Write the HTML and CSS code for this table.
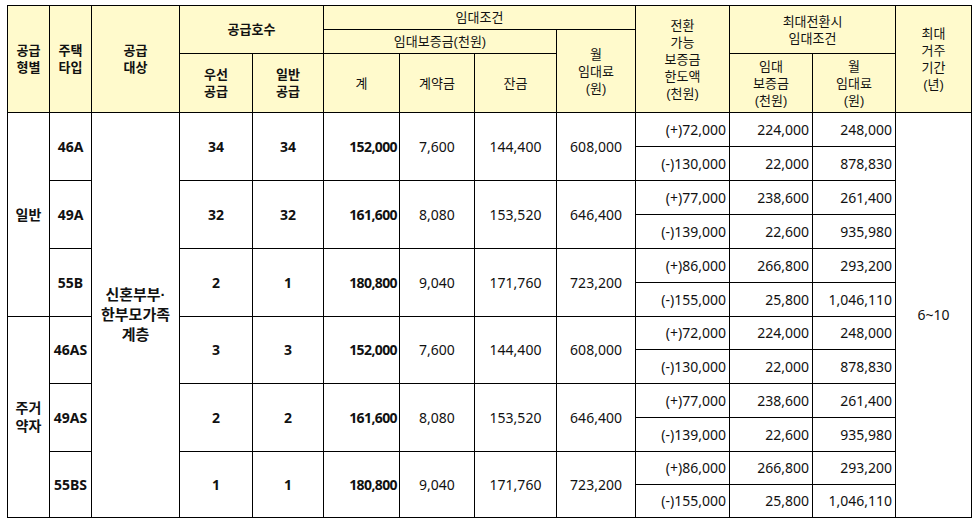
FILE: index.html
```html
<!DOCTYPE html>
<html lang="ko">
<head>
<meta charset="utf-8">
<title>임대조건</title>
<link rel="stylesheet" href="styles.css">
</head>
<body>
<table class="rent">
  <colgroup>
    <col class="c-type"><col class="c-house"><col class="c-target">
    <col class="c-pri"><col class="c-gen">
    <col class="c-sum"><col class="c-contract"><col class="c-balance"><col class="c-month">
    <col class="c-conv"><col class="c-dep"><col class="c-rent"><col class="c-period">
  </colgroup>
  <thead>
    <tr class="h1">
      <th rowspan="3" class="hb">공급<br>형별</th>
      <th rowspan="3" class="hb">주택<br>타입</th>
      <th rowspan="3" class="hb">공급<br>대상</th>
      <th rowspan="2" colspan="2" class="hb">공급호수</th>
      <th colspan="4">임대조건</th>
      <th rowspan="3">전환<br>가능<br>보증금<br>한도액<br>(천원)</th>
      <th rowspan="2" colspan="2">최대전환시<br>임대조건</th>
      <th rowspan="3">최대<br>거주<br>기간<br>(년)</th>
    </tr>
    <tr class="h2">
      <th colspan="3">임대보증금(천원)</th>
      <th rowspan="2">월<br>임대료<br>(원)</th>
    </tr>
    <tr class="h3">
      <th class="hb">우선<br>공급</th>
      <th class="hb">일반<br>공급</th>
      <th>계</th>
      <th>계약금</th>
      <th>잔금</th>
      <th>임대<br>보증금<br>(천원)</th>
      <th>월<br>임대료<br>(원)</th>
    </tr>
  </thead>
  <tbody>
    <tr class="ra">
      <td rowspan="6" class="bold kor">일반</td>
      <td rowspan="2" class="bold">46A</td>
      <td rowspan="12" class="bold target">신혼부부·<br>한부모가족<br>계층</td>
      <td rowspan="2" class="bold">34</td>
      <td rowspan="2" class="bold">34</td>
      <td rowspan="2" class="bold sum">152,000</td>
      <td rowspan="2">7,600</td>
      <td rowspan="2">144,400</td>
      <td rowspan="2">608,000</td>
      <td class="num">(+)72,000</td>
      <td class="num">224,000</td>
      <td class="num">248,000</td>
      <td rowspan="12">6~10</td>
    </tr>
    <tr class="ra">
      <td class="num">(-)130,000</td>
      <td class="num">22,000</td>
      <td class="num">878,830</td>
    </tr>
    <tr class="ra">
      <td rowspan="2" class="bold">49A</td>
      <td rowspan="2" class="bold">32</td>
      <td rowspan="2" class="bold">32</td>
      <td rowspan="2" class="bold sum">161,600</td>
      <td rowspan="2">8,080</td>
      <td rowspan="2">153,520</td>
      <td rowspan="2">646,400</td>
      <td class="num">(+)77,000</td>
      <td class="num">238,600</td>
      <td class="num">261,400</td>
    </tr>
    <tr class="ra">
      <td class="num">(-)139,000</td>
      <td class="num">22,600</td>
      <td class="num">935,980</td>
    </tr>
    <tr class="ra">
      <td rowspan="2" class="bold">55B</td>
      <td rowspan="2" class="bold">2</td>
      <td rowspan="2" class="bold">1</td>
      <td rowspan="2" class="bold sum">180,800</td>
      <td rowspan="2">9,040</td>
      <td rowspan="2">171,760</td>
      <td rowspan="2">723,200</td>
      <td class="num">(+)86,000</td>
      <td class="num">266,800</td>
      <td class="num">293,200</td>
    </tr>
    <tr class="ra">
      <td class="num">(-)155,000</td>
      <td class="num">25,800</td>
      <td class="num">1,046,110</td>
    </tr>
    <tr class="rb">
      <td rowspan="6" class="bold kor">주거<br>약자</td>
      <td rowspan="2" class="bold">46AS</td>
      <td rowspan="2" class="bold">3</td>
      <td rowspan="2" class="bold">3</td>
      <td rowspan="2" class="bold sum">152,000</td>
      <td rowspan="2">7,600</td>
      <td rowspan="2">144,400</td>
      <td rowspan="2">608,000</td>
      <td class="num">(+)72,000</td>
      <td class="num">224,000</td>
      <td class="num">248,000</td>
    </tr>
    <tr class="ra">
      <td class="num">(-)130,000</td>
      <td class="num">22,000</td>
      <td class="num">878,830</td>
    </tr>
    <tr class="ra">
      <td rowspan="2" class="bold">49AS</td>
      <td rowspan="2" class="bold">2</td>
      <td rowspan="2" class="bold">2</td>
      <td rowspan="2" class="bold sum">161,600</td>
      <td rowspan="2">8,080</td>
      <td rowspan="2">153,520</td>
      <td rowspan="2">646,400</td>
      <td class="num">(+)77,000</td>
      <td class="num">238,600</td>
      <td class="num">261,400</td>
    </tr>
    <tr class="ra">
      <td class="num">(-)139,000</td>
      <td class="num">22,600</td>
      <td class="num">935,980</td>
    </tr>
    <tr class="rb">
      <td rowspan="2" class="bold">55BS</td>
      <td rowspan="2" class="bold">1</td>
      <td rowspan="2" class="bold">1</td>
      <td rowspan="2" class="bold sum">180,800</td>
      <td rowspan="2">9,040</td>
      <td rowspan="2">171,760</td>
      <td rowspan="2">723,200</td>
      <td class="num">(+)86,000</td>
      <td class="num">266,800</td>
      <td class="num">293,200</td>
    </tr>
    <tr class="rb">
      <td class="num">(-)155,000</td>
      <td class="num">25,800</td>
      <td class="num">1,046,110</td>
    </tr>
  </tbody>
</table>
</body>
</html>
```

FILE: styles.css
```css
html, body {
  margin: 0;
  background: #ffffff;
}
body {
  padding: 5px 0 0 7px;
  font-family: "Noto Sans", "Noto Sans CJK KR", sans-serif;
  color: #111111;
}
.rent {
  border-collapse: collapse;
  table-layout: fixed;
  width: 964px;
}
.rent th, .rent td {
  border: 1px solid #000000;
  padding: 0;
  text-align: center;
  vertical-align: middle;
  overflow: visible;
  white-space: nowrap;
}
.rent th {
  background: #fffacc;
  font-weight: 400;
  font-size: 13px;
  line-height: 17px;
  font-family: "Liberation Sans", "Noto Sans CJK KR", sans-serif;
}
.rent th.hb {
  font-weight: 700;
}
.rent td {
  font-size: 14px;
  line-height: 18px;
}
.rent td.bold {
  font-weight: 700;
}
.rent td.kor {
  font-family: "Liberation Sans", "Noto Sans CJK KR", sans-serif;
}
.rent td.sum {
  text-align: right;
  padding-right: 2px;
  letter-spacing: -0.6px;
}
.rent td.num {
  text-align: right;
  padding-right: 3px;
}
.rent td.target {
  font-size: 15px;
  line-height: 20px;
  font-family: "Liberation Sans", "Noto Sans CJK KR", sans-serif;
}
.c-type { width: 42px; }
.c-house { width: 42px; }
.c-target { width: 88px; }
.c-pri { width: 73px; }
.c-gen { width: 71px; }
.c-sum { width: 76px; }
.c-contract { width: 75px; }
.c-balance { width: 82px; }
.c-month { width: 79px; }
.c-conv { width: 94px; }
.c-dep { width: 83px; }
.c-rent { width: 83px; }
.c-period { width: 76px; }
.h1 { height: 24px; }
.h2 { height: 24px; }
.h3 { height: 59px; }
.ra { height: 34px; }
.rb { height: 33px; }
```
